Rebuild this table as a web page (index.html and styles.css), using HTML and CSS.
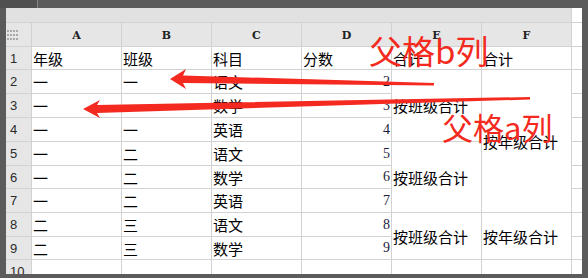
FILE: index.html
```html
<!DOCTYPE html>
<html lang="zh-CN">
<head>
  <meta charset="UTF-8" />
  <title>合计表</title>
  <link rel="stylesheet" href="styles.css">
</head>
<body>
<div class="topbar"><span class="tab"></span></div>
<div class="frame">
  <div class="sheet">
    <!-- 工具栏 -->
    <div class="tb"></div><div class="stub"></div>

    <!-- 列标 -->
    <div class="corner">
      <svg width="12" height="10" viewBox="0 0 12 10">
        <g fill="#a9a9a9">
          <rect x="0" y="0" width="2" height="2"/><rect x="3" y="0" width="2" height="2"/><rect x="6" y="0" width="2" height="2"/><rect x="9" y="0" width="2" height="2"/>
          <rect x="0" y="4" width="2" height="2"/><rect x="3" y="4" width="2" height="2"/><rect x="6" y="4" width="2" height="2"/><rect x="9" y="4" width="2" height="2"/>
          <rect x="0" y="8" width="2" height="2"/><rect x="3" y="8" width="2" height="2"/><rect x="6" y="8" width="2" height="2"/><rect x="9" y="8" width="2" height="2"/>
        </g>
      </svg>
    </div>
    <div class="colhead">A</div>
    <div class="colhead">B</div>
    <div class="colhead">C</div>
    <div class="colhead">D</div>
    <div class="colhead">E</div>
    <div class="colhead">F</div>
    <div class="stub"></div>

    <!-- 合并单元格 -->
    <div class="cell merge-e1">按班级合计</div>
    <div class="cell merge-e2">按班级合计</div>
    <div class="cell merge-e3">按班级合计</div>
    <div class="cell merge-f1">按年级合计</div>
    <div class="cell merge-f2">按年级合计</div>

    <div class="rowhead">1</div>
    <div class="cell">年级</div><div class="cell">班级</div><div class="cell">科目</div><div class="cell">分数</div><div class="cell">合计</div><div class="cell">合计</div>
    <div class="stub"></div>

    <div class="rowhead">2</div>
    <div class="cell">一</div><div class="cell">一</div><div class="cell">语文</div><div class="cell num">2</div>
    <div class="stub"></div>

    <div class="rowhead">3</div>
    <div class="cell">一</div><div class="cell">一</div><div class="cell">数学</div><div class="cell num">3</div>
    <div class="stub"></div>

    <div class="rowhead">4</div>
    <div class="cell">一</div><div class="cell">一</div><div class="cell">英语</div><div class="cell num">4</div>
    <div class="stub"></div>

    <div class="rowhead">5</div>
    <div class="cell">一</div><div class="cell">二</div><div class="cell">语文</div><div class="cell num">5</div>
    <div class="stub"></div>

    <div class="rowhead">6</div>
    <div class="cell">一</div><div class="cell">二</div><div class="cell">数学</div><div class="cell num">6</div>
    <div class="stub"></div>

    <div class="rowhead">7</div>
    <div class="cell">一</div><div class="cell">二</div><div class="cell">英语</div><div class="cell num">7</div>
    <div class="stub"></div>

    <div class="rowhead">8</div>
    <div class="cell">二</div><div class="cell">三</div><div class="cell">语文</div><div class="cell num">8</div>
    <div class="stub"></div>

    <div class="rowhead">9</div>
    <div class="cell">二</div><div class="cell">三</div><div class="cell">数学</div><div class="cell num">9</div>
    <div class="stub"></div>

    <div class="rowhead">10</div>
    <div class="cell"></div><div class="cell"></div><div class="cell"></div><div class="cell"></div><div class="cell"></div><div class="cell"></div>
    <div class="stub"></div>
  </div>
</div>

<!-- 标注 -->
<svg class="marks" width="588" height="278" viewBox="0 0 588 278">
  <polygon fill="#f42a20" points="170,79 186,69 183,75.5 434,83 434,85.5 183,83 186,89"/>
  <polygon fill="#f42a20" points="83,109 100,100 97,105 530,97 530,99.5 97,113 100,118"/>
</svg>
<div class="label label-b">父格b列</div>
<div class="label label-a">父格a列</div>
</body>
</html>
```

FILE: styles.css
```css
body {
  margin: 0;
  width: 588px;
  height: 278px;
  background: #5b5b5b;
  position: relative;
  overflow: hidden;
  font-family: "Noto Sans CJK SC", sans-serif;
}
.topbar {
  height: 8px;
  display: flex;
}
.topbar .tab {
  width: 37px;
  background: #505050;
  border-right: 1px solid #858585;
}
.frame {
  margin-left: 6px;
  width: 576px;
  height: 266px;
  overflow: hidden;
}
.sheet {
  display: grid;
  grid-template-columns: 25px repeat(6, 89px) 10px;
  grid-template-rows: 14px 23px 22px 23px 23px 23px 23px 22px 23px 23px 22px 23px;
  gap: 1px;
  background: #d2d2d2;
}
.tb {
  grid-column: 1 / 8;
  background: #e1e1e1;
}
.stub {
  background: #fff;
}
.corner {
  background: #e6e6e6;
  display: flex;
  align-items: center;
  padding-left: 1px;
}
.colhead {
  background: #e6e6e6;
  display: flex;
  align-items: center;
  justify-content: center;
  font-family: "DejaVu Serif", serif;
  font-weight: bold;
  font-size: 11px;
  color: #222;
  padding-top: 1px;
}
.rowhead {
  background: #e6e6e6;
  display: flex;
  align-items: center;
  padding-left: 4px;
  font-family: "Liberation Sans", sans-serif;
  font-size: 13px;
  color: #2a2a2a;
}
.cell {
  background: #fff;
  display: flex;
  align-items: center;
  padding-left: 1px;
  font-size: 15px;
  line-height: 1;
  color: #000;
  white-space: nowrap;
}
.num {
  justify-content: flex-end;
  padding: 0 1px 0 0;
  font-family: "Liberation Serif", serif;
  font-size: 14px;
  color: #1c1c3a;
}
.merge-e1 { grid-column: 6; grid-row: 4 / span 3; }
.merge-e2 { grid-column: 6; grid-row: 7 / span 3; }
.merge-e3 { grid-column: 6; grid-row: 10 / span 2; }
.merge-f1 { grid-column: 7; grid-row: 4 / span 6; }
.merge-f2 { grid-column: 7; grid-row: 10 / span 2; }

.marks {
  position: absolute;
  top: 0;
  left: 0;
  pointer-events: none;
}
.label {
  position: absolute;
  color: #f42a20;
  line-height: 1;
  white-space: nowrap;
}
.label-b {
  left: 369px;
  top: 34px;
  font-size: 33px;
}
.label-a {
  left: 442px;
  top: 111px;
  font-size: 31px;
}
```
